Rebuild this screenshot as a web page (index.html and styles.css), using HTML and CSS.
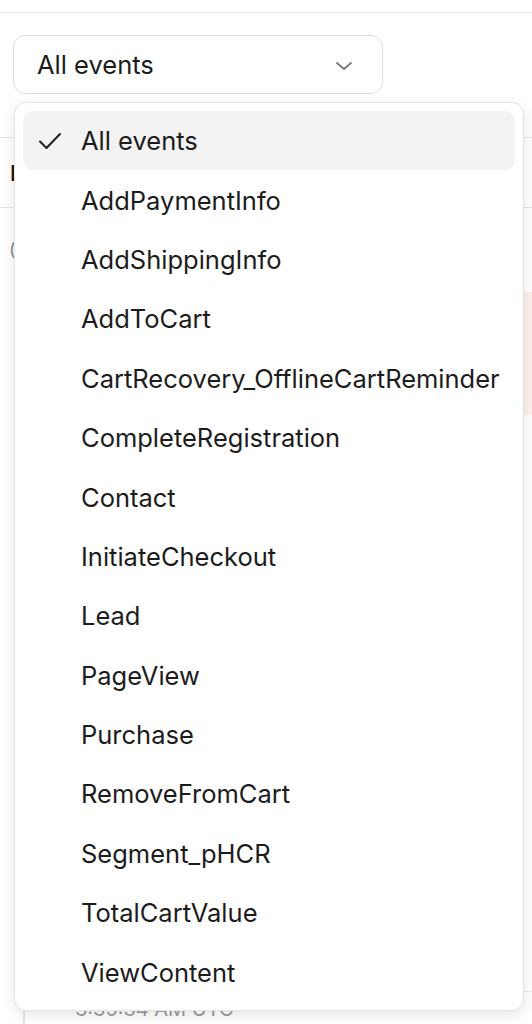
FILE: index.html
```html
<!DOCTYPE html>
<html lang="en">
<head>
  <meta charset="UTF-8">
  <meta name="viewport" content="width=device-width, initial-scale=1.0">
  <title>Events</title>
  <link rel="stylesheet" href="styles.css">
</head>
<body>
  <div class="page">
    <div class="topbar"></div>
    <div class="filters">
      <div class="select">
        <span>All events</span>
        <svg class="chevron" width="18" height="10" viewBox="0 0 18 10"><path d="M2 2l7 6 7-6" fill="none" stroke="#777" stroke-width="1.8" stroke-linecap="round" stroke-linejoin="round"/></svg>
      </div>
    </div>
    <div class="table">
      <div class="thead"><span>ID</span></div>
      <div class="row"><span class="muted">(2)</span></div>
      <div class="row pink"></div>
      <div class="card"><span class="time">3:35:34 AM UTC</span></div>
    </div>

    <ul class="menu">
      <li class="active">
        <svg class="check" width="24" height="18" viewBox="0 0 24 18"><path d="M2 9.5l6.5 6.5L22 2" fill="none" stroke="#1f1f1f" stroke-width="2" stroke-linecap="round" stroke-linejoin="round"/></svg>
        All events
      </li>
      <li>AddPaymentInfo</li>
      <li>AddShippingInfo</li>
      <li>AddToCart</li>
      <li>CartRecovery_OfflineCartReminder</li>
      <li>CompleteRegistration</li>
      <li>Contact</li>
      <li>InitiateCheckout</li>
      <li>Lead</li>
      <li>PageView</li>
      <li>Purchase</li>
      <li>RemoveFromCart</li>
      <li>Segment_pHCR</li>
      <li>TotalCartValue</li>
      <li>ViewContent</li>
    </ul>
  </div>
</body>
</html>
```

FILE: styles.css
```css
*{
  margin: 0;
  padding: 0;
  box-sizing: border-box;
  list-style: none;
}
body{
  background: #fff;
  font-family: Inter, "Noto Sans", sans-serif;
  color: #1c1c1c;
  width: 532px;
  height: 1024px;
  overflow: hidden;
}
.page{
  position: relative;
  height: 1024px;
}
.topbar{
  height: 13px;
  border-bottom: 1px solid #e6e6e4;
}
.filters{
  padding: 22px 13px 0;
}
.select{
  width: 370px;
  height: 59px;
  border: 1px solid #dfdfdd;
  border-radius: 12px;
  display: flex;
  align-items: center;
  justify-content: space-between;
  padding: 0 29px 0 23px;
  font-size: 25.5px;
}
.chevron{
  margin-top: 2px;
}
.table{
  margin-top: 43px;
}
.thead{
  height: 71px;
  border-top: 1px solid #e6e6e4;
  border-bottom: 1px solid #e6e6e4;
  display: flex;
  align-items: center;
  padding-left: 10px;
  font-size: 22px;
  font-weight: 600;
}
.row{
  height: 84px;
  padding-left: 9px;
  display: flex;
  align-items: center;
  font-size: 18px;
}
.muted{
  color: #888;
}
.pink{
  height: 123px;
  margin-left: 20px;
  background: #fdf1ed;
}
.card{
  margin: 576px 0 0 23px;
  border-left: 2px solid #e4e4e4;
  border-top: 1px solid #ececec;
  height: 60px;
  padding: 4px 0 0 50px;
  line-height: 26px;
}
.time{
  font-size: 20px;
  color: #9a9a9a;
}
.menu{
  position: absolute;
  left: 14px;
  top: 102px;
  width: 510px;
  padding: 8px 8px;
  background: #fff;
  border: 1px solid #e4e4e2;
  border-radius: 12px;
  box-shadow: 0 4px 14px rgba(0,0,0,0.10);
}
.menu li{
  height: 59.4px;
  display: flex;
  align-items: center;
  padding-left: 58px;
  font-size: 25.5px;
  border-radius: 10px;
  position: relative;
}
.menu li.active{
  background: #f3f3f3;
}
.check{
  position: absolute;
  left: 15px;
  top: 21px;
}
```
